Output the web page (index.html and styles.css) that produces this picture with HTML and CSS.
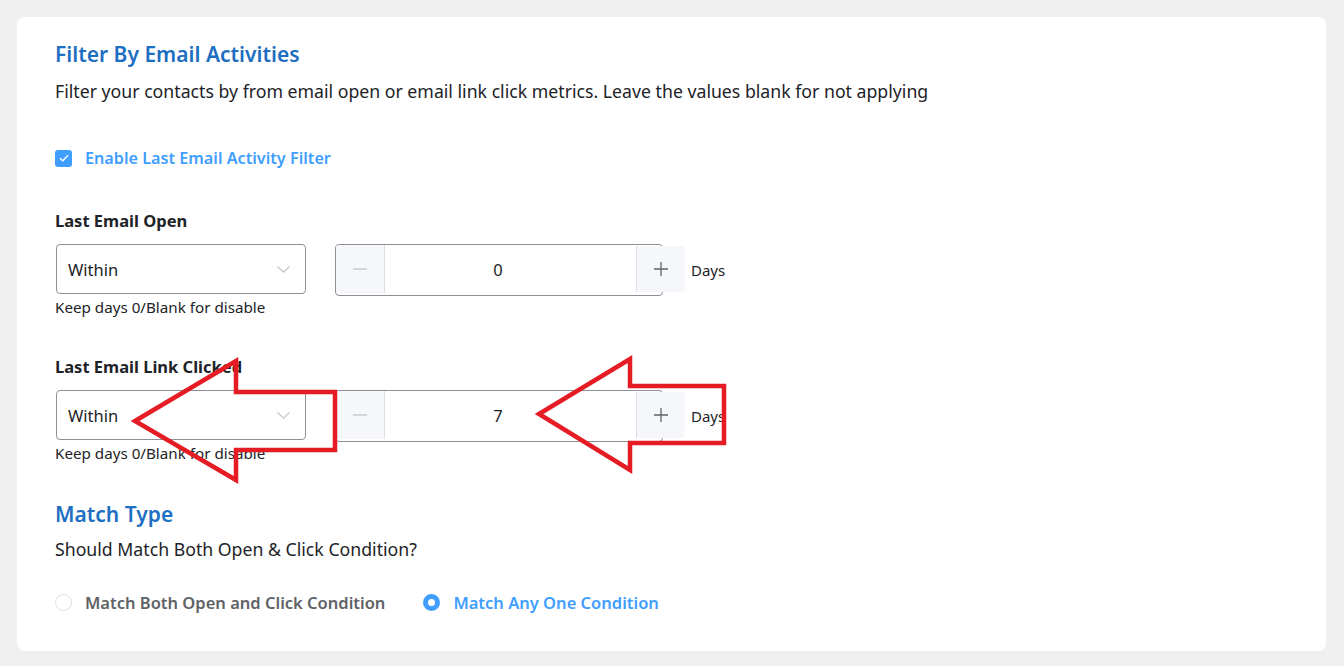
FILE: index.html
```html
<!DOCTYPE html>
<html lang="en">
<head>
<meta charset="utf-8">
<title>Filter By Email Activities</title>
<link rel="stylesheet" href="styles.css">
</head>
<body>
<div class="card">
  <h2 class="title">Filter By Email Activities</h2>
  <p class="desc">Filter your contacts by from email open or email link click metrics. Leave the values blank for not applying</p>

  <label class="check">
    <span class="check-box">
      <svg width="10" height="8" viewBox="0 0 10 8"><path d="M1 4.2 L3.8 6.8 L9 1.2" fill="none" stroke="#fff" stroke-width="1.3"/></svg>
    </span>
    <span class="check-label">Enable Last Email Activity Filter</span>
  </label>

  <div class="field field-first">
    <div class="field-label">Last Email Open</div>
    <div class="field-row">
      <div class="select">
        <span class="select-value">Within</span>
        <svg class="chev" width="13" height="7" viewBox="0 0 13 7"><path d="M0.5 0.5 L6.5 6.2 L12.5 0.5" fill="none" stroke="#c0c4cc" stroke-width="1.1"/></svg>
      </div>
      <div class="num">
        <span class="num-btn num-minus"><svg width="14" height="14" viewBox="0 0 14 14"><path d="M0 7 H14" stroke="#c0c4cc" stroke-width="1.3"/></svg></span>
        <span class="num-input">0</span>
        <span class="num-btn num-plus"><svg width="14" height="14" viewBox="0 0 14 14"><path d="M0 7 H14 M7 0 V14" stroke="#606266" stroke-width="1.3"/></svg></span>
      </div>
      <span class="days">Days</span>
    </div>
    <div class="help">Keep days 0/Blank for disable</div>
  </div>

  <div class="field">
    <div class="field-label">Last Email Link Clicked</div>
    <div class="field-row">
      <div class="select">
        <span class="select-value">Within</span>
        <svg class="chev" width="13" height="7" viewBox="0 0 13 7"><path d="M0.5 0.5 L6.5 6.2 L12.5 0.5" fill="none" stroke="#c0c4cc" stroke-width="1.1"/></svg>
      </div>
      <div class="num">
        <span class="num-btn num-minus"><svg width="14" height="14" viewBox="0 0 14 14"><path d="M0 7 H14" stroke="#c0c4cc" stroke-width="1.3"/></svg></span>
        <span class="num-input">7</span>
        <span class="num-btn num-plus"><svg width="14" height="14" viewBox="0 0 14 14"><path d="M0 7 H14 M7 0 V14" stroke="#606266" stroke-width="1.3"/></svg></span>
      </div>
      <span class="days">Days</span>
    </div>
    <div class="help">Keep days 0/Blank for disable</div>
  </div>

  <h2 class="title match-title">Match Type</h2>
  <p class="desc match-desc">Should Match Both Open &amp; Click Condition?</p>

  <div class="radios">
    <label class="radio">
      <span class="radio-dot"></span>
      <span class="radio-label">Match Both Open and Click Condition</span>
    </label>
    <label class="radio radio-on">
      <span class="radio-dot"></span>
      <span class="radio-label">Match Any One Condition</span>
    </label>
  </div>
</div>

<svg class="arrows" width="1344" height="666" viewBox="0 0 1344 666">
  <polygon points="135,421 236,361 236,392 335,392 335,450 236,450 236,480" fill="none" stroke="#e51c24" stroke-width="4.5" stroke-linejoin="miter"/>
  <polygon points="539,414 630,359 630,386 724,386 724,443 630,443 630,470" fill="none" stroke="#e51c24" stroke-width="4.5" stroke-linejoin="miter"/>
</svg>
</body>
</html>
```

FILE: styles.css
```css
* { box-sizing: border-box; }

html, body {
  margin: 0;
  padding: 0;
}

body {
  background: #f0f0f1;
  font-family: "Noto Sans", "Open Sans", "Liberation Sans", sans-serif;
  color: #1d2327;
  padding: 17px 18px 15px 17px;
  position: relative;
}

.card {
  background: #fff;
  border-radius: 8px;
  padding: 22px 38px 37px 38px;
}

.title {
  margin: 0;
  font-size: 21px;
  line-height: 30px;
  font-weight: 600;
  color: #1e6fc1;
}

.desc {
  margin: 9px 0 0 0;
  font-size: 17.7px;
  line-height: 26px;
  color: #1d2327;
}

.check {
  display: flex;
  align-items: center;
  margin-top: 42px;
  height: 24px;
}

.check-box {
  width: 17px;
  height: 17px;
  border-radius: 3px;
  background: #409eff;
  display: flex;
  align-items: center;
  justify-content: center;
  margin-right: 13px;
}

.check-label {
  font-size: 16.2px;
  font-weight: 600;
  color: #409eff;
}

.field {
  margin-top: 38px;
}

.field-first {
  margin-top: 40px;
}

.field-label {
  font-size: 16.5px;
  line-height: 22px;
  font-weight: 700;
  color: #1d2327;
}

.field-row {
  display: flex;
  align-items: center;
  margin-top: 12px;
}

.select {
  margin-left: 1px;
  width: 250px;
  height: 50px;
  border: 1px solid #8c8f94;
  border-radius: 4px;
  display: flex;
  align-items: center;
  justify-content: space-between;
  padding: 1px 15px 0 11px;
}

.select-value {
  font-size: 16.5px;
  color: #1d2327;
}

.num {
  position: relative;
  margin-left: 29px;
  width: 350px;
  height: 50px;
  display: flex;
  align-items: center;
}

.num::before {
  content: "";
  position: absolute;
  left: 0;
  top: 0;
  width: 326px;
  height: 50px;
  border: 1px solid #8c8f94;
  border-radius: 4px;
}

.num-btn {
  position: relative;
  display: flex;
  align-items: center;
  justify-content: center;
  background: #f5f7fa;
}

.num-minus {
  margin-left: 1px;
  width: 49px;
  height: 48px;
  border-right: 1px solid #dcdfe6;
  border-radius: 3px 0 0 3px;
}

.num-input {
  flex: 1;
  text-align: center;
  padding: 1px 25px 0 0;
  font-size: 16.5px;
  color: #1d2327;
}

.num-plus {
  width: 49px;
  height: 46px;
  border-left: 1px solid #dcdfe6;
  border-radius: 0 4px 4px 0;
}

.days {
  margin-left: 6px;
  padding-top: 2px;
  font-size: 15px;
  color: #1d2327;
}

.help {
  margin-top: 3px;
  font-size: 15.2px;
  line-height: 21px;
  color: #1d2327;
}

.match-title {
  margin-top: 35px;
}

.match-desc {
  margin-top: 7px;
}

.radios {
  display: flex;
  align-items: center;
  margin-top: 28px;
  height: 24px;
}

.radio {
  display: flex;
  align-items: center;
  margin-right: 38px;
}

.radio-dot {
  width: 17px;
  height: 17px;
  border-radius: 50%;
  border: 1px solid #dcdfe6;
  margin-right: 13px;
  background: #fff;
}

.radio-label {
  font-size: 16.5px;
  font-weight: 600;
  color: #606266;
}

.radio-on .radio-dot {
  border: 5.5px solid #409eff;
}

.radio-on .radio-label {
  color: #409eff;
}

.arrows {
  position: absolute;
  left: 0;
  top: 0;
  pointer-events: none;
}
```
